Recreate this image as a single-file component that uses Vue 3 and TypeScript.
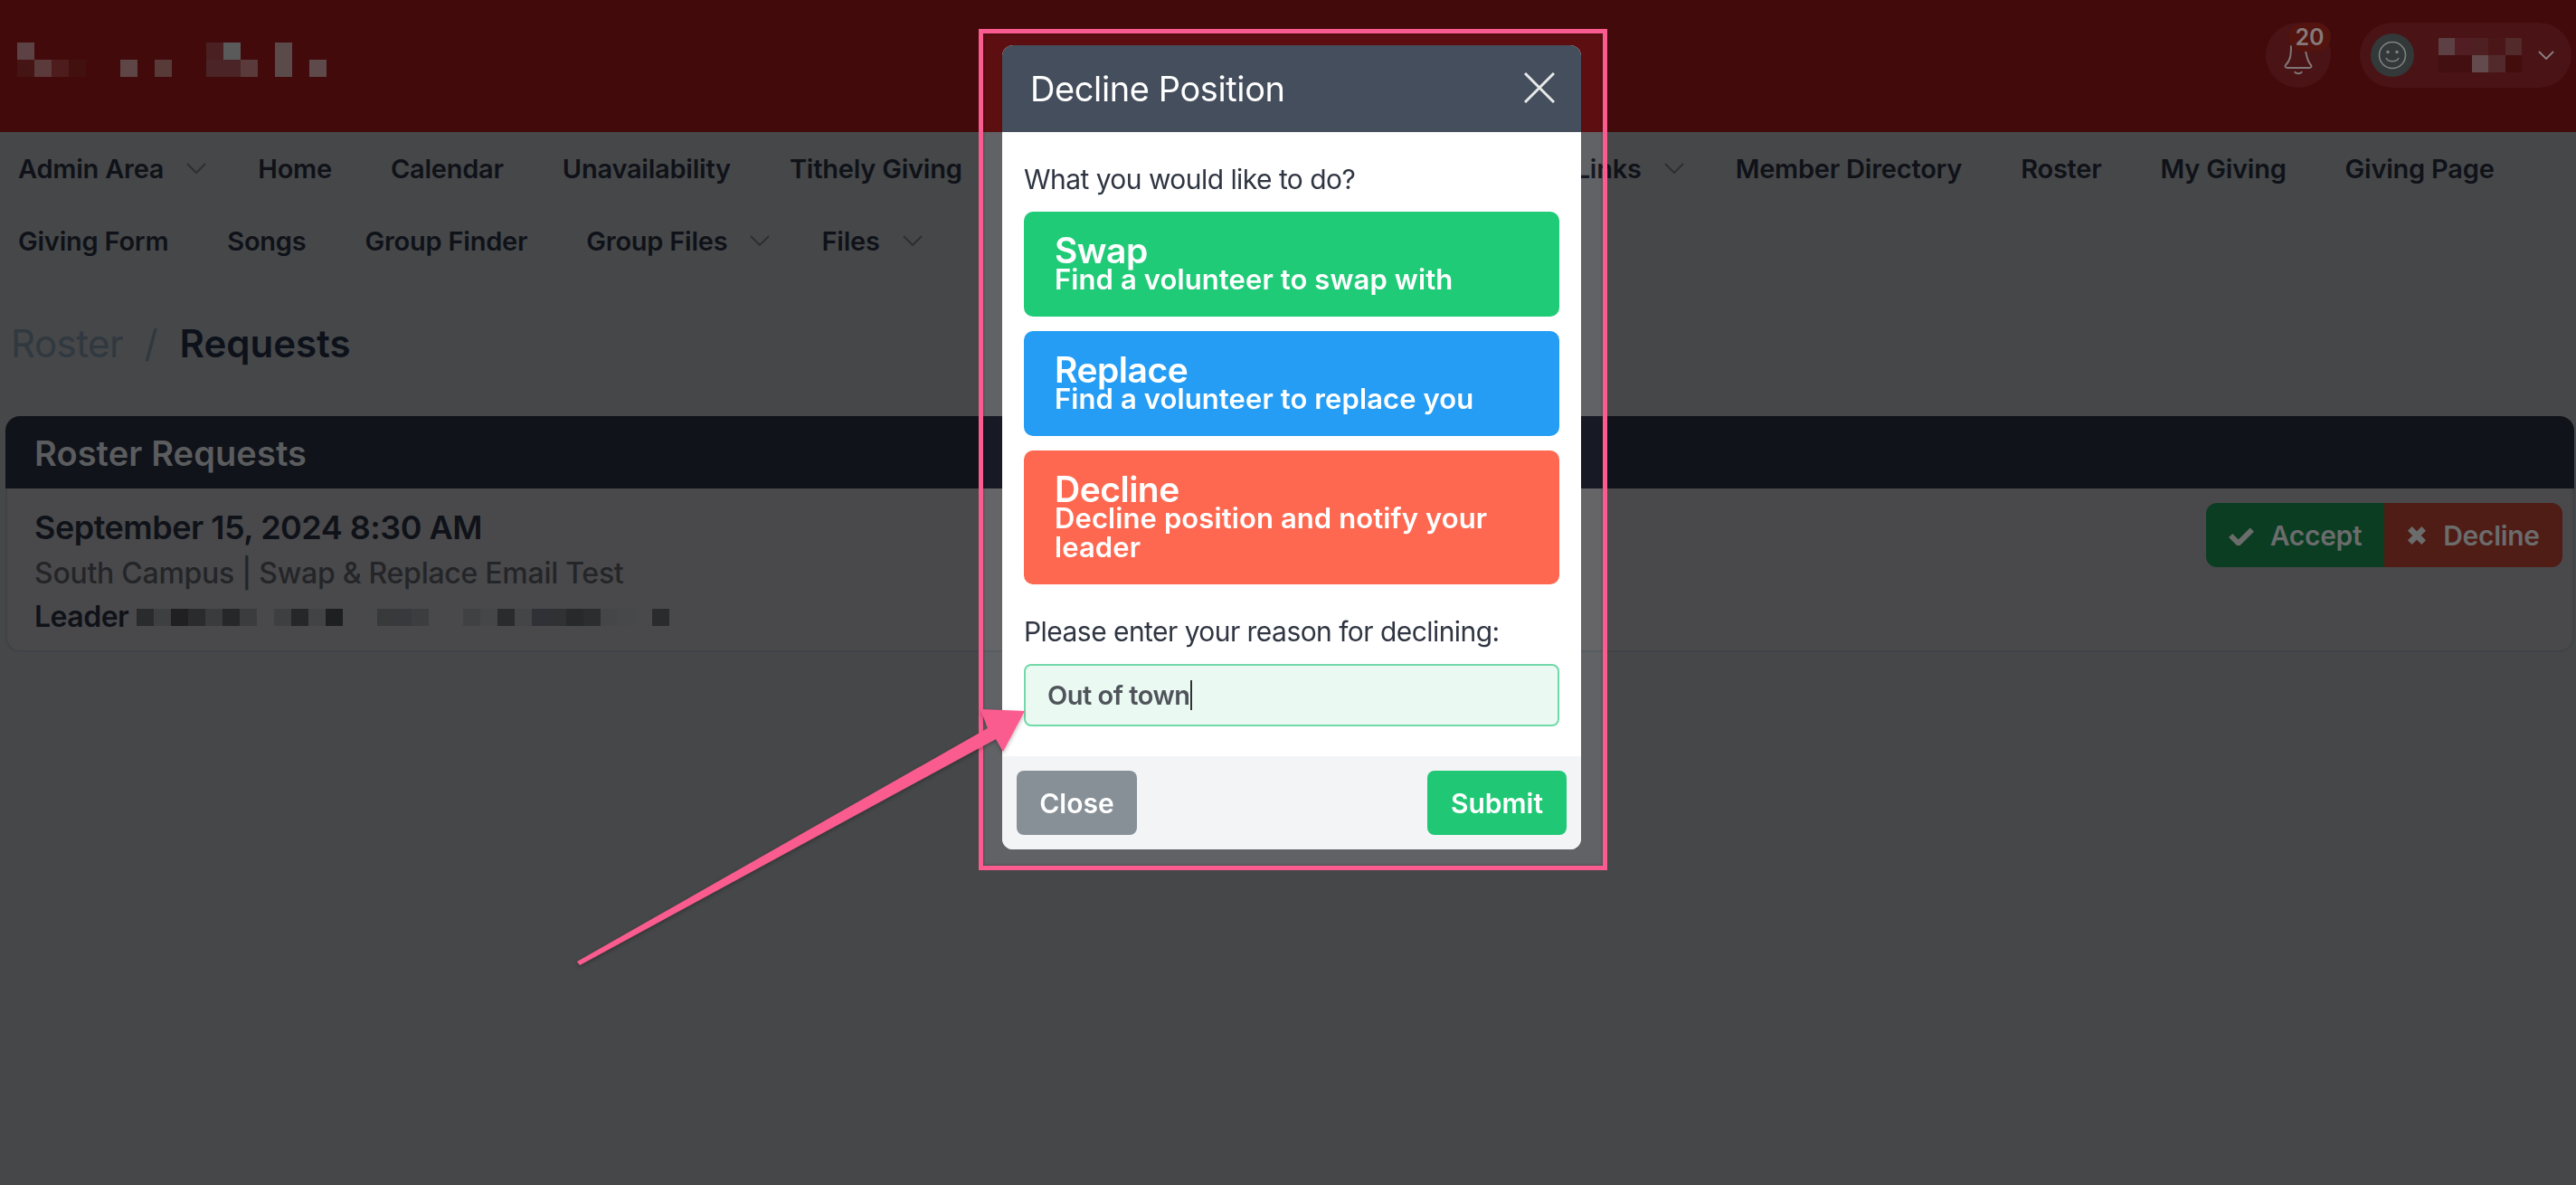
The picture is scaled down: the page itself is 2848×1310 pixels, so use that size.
<script setup lang="ts">
interface NavItem { label: string; caret?: boolean; spacer?: boolean }
const nav: NavItem[] = [
  { label: 'Admin Area', caret: true },
  { label: 'Home' },
  { label: 'Calendar' },
  { label: 'Unavailability' },
  { label: 'Tithely Giving' },
  { label: 'Links', caret: true, spacer: true },
  { label: 'Member Directory' },
  { label: 'Roster' },
  { label: 'My Giving' },
  { label: 'Giving Page' },
  { label: 'Giving Form' },
  { label: 'Songs' },
  { label: 'Group Finder' },
  { label: 'Group Files', caret: true },
  { label: 'Files', caret: true },
]
const _ = 'transparent'
const logoPixels = [
  '#5c4244', _, _, _, _, _, _, _, _, _, _, '#4a2022', '#5a5a5a', _, _, '#5a4a4a', _, _,
  '#451414', '#5a3a3a', '#4f1c1e', '#431010', _, _, '#5e4646', _, '#583a38', _, _, '#4a2426', '#4a2426', '#5a3a3a', _, '#5a4a4a', _, '#5e4a4a',
]
const userPixels = [
  '#5c4044', '#521e24', '#4f2022', '#4b1618', '#532a2a',
  '#430f10', '#440f11', '#634a4c', '#522a2c', '#430d0e',
]
const leaderPixels = [
  '#2a2b2d', '#3e3f41', '#201f22', '#2a2b2d', '#3a3b3d', '#262729', '#3b3c3e', _,
  '#3e3f41', '#262729', '#424345', '#1e1f21', _, _, '#38393b', '#38393d', '#3c3d3f', _, _,
  '#404143', '#454648', '#2a2b2d', '#444547', '#303136', '#2f3132', '#28292b', '#2c2d2f',
  '#454648', '#47484a', _, '#2a2b2d',
]
</script>

<template>
  <div class="page">
    <header class="topbar">
      <div class="pixels logo">
        <i v-for="(c, i) in logoPixels" :key="i" :style="{ background: c }"></i>
      </div>
      <div class="top-actions">
        <div class="bell-wrap">
          <svg class="bell" viewBox="0 0 32 36" fill="none" stroke="#7f7677" stroke-width="2">
            <path d="M8 2 C8 14 7 19 2 24 C1 26 2 27 4 27 H28 C30 27 31 26 30 24 C26 20 25 14 24 8" />
            <path d="M12 31 C13 34 19 34 20 31" />
          </svg>
          <span class="badge">20</span>
        </div>
        <div class="user">
          <span class="avatar">
            <svg viewBox="0 0 32 32" fill="none" stroke="#808282" stroke-width="1.6">
              <circle cx="16" cy="16" r="14.5" />
              <path d="M9 19 C11 24 21 24 23 19" />
              <circle cx="11" cy="12.5" r="1" fill="#808282" />
              <circle cx="21" cy="12.5" r="1" fill="#808282" />
            </svg>
          </span>
          <div class="pixels user-name">
            <i v-for="(c, i) in userPixels" :key="i" :style="{ background: c }"></i>
          </div>
          <svg class="user-caret" viewBox="0 0 18 10" fill="none" stroke="#8a8284" stroke-width="1.8">
            <path d="M1 1 L9 9 L17 1" />
          </svg>
        </div>
      </div>
    </header>

    <nav class="nav">
      <a v-for="item in nav" :key="item.label" class="nav-item" :class="{ spaced: item.spacer }">
        {{ item.label }}
        <svg v-if="item.caret" class="caret" viewBox="0 0 22 12" fill="none" stroke="#2c2f34" stroke-width="2">
          <path d="M1 1 L11 11 L21 1" />
        </svg>
      </a>
    </nav>

    <div class="crumbs">
      <span class="crumb-link">Roster</span>
      <span class="crumb-sep">/</span>
      <span class="crumb-current">Requests</span>
    </div>

    <section class="card">
      <div class="card-head">Roster Requests</div>
      <div class="card-body">
        <div class="card-info">
          <div class="date">September 15, 2024 8:30 AM</div>
          <div class="event">South Campus | Swap &amp; Replace Email Test</div>
          <div class="leader">
            <span>Leader</span>
            <span class="leader-name">
              <i v-for="(c, i) in leaderPixels" :key="i" :style="{ background: c }"></i>
            </span>
          </div>
        </div>
        <div class="btn-group">
          <button class="group-btn accept">
            <svg viewBox="0 0 26 20" class="g-icon check"><path d="M2 10 L10 18 L24 4" fill="none" stroke="#6b6c6c" stroke-width="5.5" /></svg>
            Accept
          </button>
          <button class="group-btn refuse">
            <svg viewBox="0 0 20 20" class="g-icon cross"><path d="M3 3 L17 17 M17 3 L3 17" fill="none" stroke="#6b6c6c" stroke-width="6" /></svg>
            Decline
          </button>
        </div>
      </div>
    </section>

    <div class="highlight"></div>

    <div class="modal">
      <div class="modal-head">
        <span class="modal-title">Decline Position</span>
        <svg class="modal-x" viewBox="0 0 34 34" fill="none" stroke="#e8e9ea" stroke-width="3">
          <path d="M1 1 L33 33 M33 1 L1 33" />
        </svg>
      </div>
      <div class="modal-body">
        <p class="prompt">What you would like to do?</p>
        <div class="choices">
          <button class="choice swap">
            <span class="choice-title">Swap</span>
            <span class="choice-sub">Find a volunteer to swap with</span>
          </button>
          <button class="choice replace">
            <span class="choice-title">Replace</span>
            <span class="choice-sub">Find a volunteer to replace you</span>
          </button>
          <button class="choice decline">
            <span class="choice-title">Decline</span>
            <span class="choice-sub">Decline position and notify your leader</span>
          </button>
        </div>
        <p class="prompt reason">Please enter your reason for declining:</p>
        <div class="field"><span>Out of town</span><span class="cursor"></span></div>
      </div>
      <div class="modal-foot">
        <button class="foot-btn close">Close</button>
        <button class="foot-btn submit">Submit</button>
      </div>
    </div>

    <svg class="arrow" viewBox="0 0 2848 1310">
      <defs>
        <filter id="arrowShadow" x="-5%" y="-5%" width="110%" height="110%">
          <feDropShadow dx="0" dy="2" stdDeviation="2" flood-color="#000" flood-opacity="0.3" />
        </filter>
      </defs>
      <polygon
        filter="url(#arrowShadow)"
        fill="#fb5c8f"
        points="638,1063 1092,805 1084,784 1133,786 1109,831 1101,817 641,1067"
      />
    </svg>
  </div>
</template>

<style>
html, body { margin: 0; background: #464749; }
</style>

<style scoped>
.page {
  position: relative;
  width: 2848px;
  height: 1310px;
  overflow: hidden;
  background: #464749;
  color: #0f1218;
  font-family: Inter, "Noto Sans", sans-serif;
}
button { font-family: inherit; border: 0; }
p { margin: 0; }
.pixels { display: grid; grid-auto-rows: 19px; }
.pixels i, .leader-name i { display: block; }

.topbar {
  height: 146px;
  background: #430a0c;
  display: flex;
  align-items: center;
  justify-content: space-between;
  box-sizing: border-box;
  padding: 0 5px 0 19px;
}
.logo { grid-template-columns: repeat(18, 19px); margin-top: -14px; }
.top-actions { display: flex; align-items: center; gap: 32px; margin-top: -24px; }
.bell-wrap {
  position: relative;
  width: 72px;
  height: 72px;
  border-radius: 50%;
  background: #4a1315;
  display: flex;
  align-items: center;
  justify-content: center;
}
.bell { width: 32px; height: 36px; margin-top: 10px; }
.badge {
  position: absolute;
  top: 0;
  right: 0;
  width: 47px;
  height: 32px;
  border-radius: 16px;
  background: #53130f;
  color: #857a79;
  font-size: 25px;
  font-weight: 600;
  line-height: 32px;
  text-align: center;
}
.user {
  width: 234px;
  height: 72px;
  border-radius: 36px;
  background: #4a1315;
  display: flex;
  align-items: center;
  box-sizing: border-box;
  padding-left: 12px;
}
.avatar {
  width: 48px;
  height: 48px;
  border-radius: 50%;
  background: #333839;
  display: flex;
  align-items: center;
  justify-content: center;
  flex: none;
}
.avatar svg { width: 32px; height: 32px; }
.user-name { grid-template-columns: repeat(5, 18.4px); margin-left: 27px; }
.user-caret { width: 18px; height: 10px; margin-left: 18px; }

.nav {
  display: flex;
  flex-wrap: wrap;
  padding-left: 20px;
  column-gap: 65px;
}
.nav-item {
  height: 80px;
  display: flex;
  align-items: center;
  font-size: 29px;
  font-weight: 600;
  letter-spacing: -0.23px;
  white-space: nowrap;
}
.nav-item.spaced { margin-left: 613px; }
.caret { width: 22px; height: 12px; margin-left: 25px; margin-right: -8px; }

.crumbs {
  display: flex;
  align-items: center;
  height: 58px;
  margin: 44px 0 52px 12px;
  font-size: 42px;
}
.crumb-link { color: #303840; letter-spacing: -0.5px; }
.crumb-sep { color: #30383f; margin: 0 24px 0 23px; }
.crumb-current { font-weight: 600; color: #0c111a; }

.card { margin: 0 2px 0 6px; }
.card-head {
  height: 80px;
  padding-left: 32px;
  border-radius: 16px 16px 0 0;
  background: #11131a;
  color: #5b5c5e;
  font-size: 38px;
  font-weight: 600;
  line-height: 82px;
  letter-spacing: 0.1px;
}
.card-body {
  display: flex;
  justify-content: space-between;
  height: 181px;
  box-sizing: border-box;
  border: 2px solid #3f4347;
  border-top: 0;
  border-radius: 0 0 16px 16px;
  background: #49494b;
  padding: 16px 11px 0 30px;
}
.date { font-size: 36px; font-weight: 600; line-height: 54px; letter-spacing: -0.5px; }
.event { font-size: 32px; font-weight: 500; line-height: 48px; color: #242528; letter-spacing: -0.27px; }
.leader { display: flex; align-items: center; font-size: 32px; font-weight: 600; line-height: 48px; gap: 9px; letter-spacing: -0.5px; }
.leader-name { display: grid; grid-template-columns: repeat(31, 19px); grid-auto-rows: 19px; }
.btn-group { display: flex; height: 71px; border-radius: 12px; overflow: hidden; }
.group-btn {
  width: 197px;
  display: flex;
  align-items: center;
  justify-content: center;
  gap: 18px;
  color: #6b6c6c;
  font-size: 30px;
  font-weight: 600;
  letter-spacing: -0.3px;
}
.accept { background: #0a3d22; }
.refuse { background: #4f1c16; }
.g-icon.check { width: 28px; height: 22px; }
.g-icon.cross { width: 22px; height: 22px; }

.highlight {
  position: absolute;
  left: 1082px;
  top: 32px;
  width: 695px;
  height: 930px;
  box-sizing: border-box;
  border: 5px solid #fb5c8f;
  backdrop-filter: brightness(1.38);
  box-shadow: inset 0 0 3px rgba(0, 0, 0, 0.4);
}

.modal {
  position: absolute;
  left: 1108px;
  top: 50px;
  width: 640px;
  border-radius: 12px;
  overflow: hidden;
  background: #fff;
  color: #2f3542;
}
.modal-head {
  height: 96px;
  background: #454e5c;
  color: #fff;
  display: flex;
  align-items: center;
  justify-content: space-between;
  padding: 0 29px 0 31px;
}
.modal-title { font-size: 38px; letter-spacing: -0.4px; }
.modal-x { width: 34px; height: 34px; margin-top: -2px; }
.modal-body { padding: 0 24px 33px; }
.prompt { font-size: 30px; line-height: 48px; padding-top: 28px; letter-spacing: -0.55px; }
.choices { display: flex; flex-direction: column; gap: 16px; margin-top: 12px; }
.choice {
  display: flex;
  flex-direction: column;
  align-items: flex-start;
  padding: 27px 34px 25px;
  border-radius: 10px;
  color: #fff;
  text-align: left;
}
.choice-title { font-size: 39px; font-weight: 600; line-height: 32px; letter-spacing: -0.5px; }
.choice-sub { font-size: 31px; font-weight: 600; line-height: 32px; letter-spacing: 0.1px; }
.swap { background: #20cb78; }
.replace { background: #259df4; }
.decline { background: #ff6850; }
.reason { padding-top: 28px; padding-bottom: 1px; }
.field {
  display: flex;
  align-items: center;
  height: 69px;
  margin-top: 11px;
  box-sizing: border-box;
  border: 2px solid #72d9a9;
  border-radius: 8px;
  background: #eafaf3;
  padding-left: 24px;
  color: #50545a;
  font-size: 29px;
  font-weight: 600;
  letter-spacing: -0.5px;
}
.cursor { width: 2px; height: 33px; background: #333; }
.modal-foot {
  display: flex;
  justify-content: space-between;
  background: #f3f4f6;
  padding: 16px;
}
.foot-btn {
  height: 71px;
  border-radius: 8px;
  color: #fff;
  font-size: 30px;
  font-weight: 600;
}
.close { width: 133px; background: #878f97; }
.submit { width: 154px; background: #20c875; }

.arrow { position: absolute; inset: 0; width: 2848px; height: 1310px; pointer-events: none; }
</style>
